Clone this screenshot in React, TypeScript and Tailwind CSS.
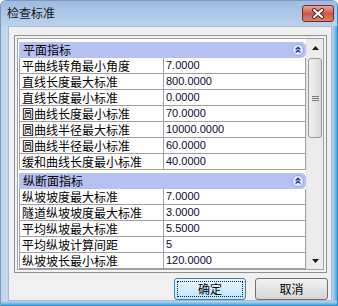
import React from 'react';

const cjk = { fontFamily: "'Noto Sans CJK SC', 'Noto Sans', sans-serif" };
const num = { fontFamily: "'Liberation Sans', Arial, sans-serif" };

type Row = { name: string; value: string };

const planRows: Row[] = [
  { name: '平曲线转角最小角度', value: '7.0000' },
  { name: '直线长度最大标准', value: '800.0000' },
  { name: '直线长度最小标准', value: '0.0000' },
  { name: '圆曲线长度最小标准', value: '70.0000' },
  { name: '圆曲线半径最大标准', value: '10000.0000' },
  { name: '圆曲线半径最小标准', value: '60.0000' },
  { name: '缓和曲线长度最小标准', value: '40.0000' },
];

// last row is only a sliver at the bottom edge, its text is hidden
const profileRows: Row[] = [
  { name: '纵坡坡度最大标准', value: '7.0000' },
  { name: '隧道纵坡坡度最大标准', value: '3.0000' },
  { name: '平均纵坡最大标准', value: '5.5000' },
  { name: '平均纵坡计算间距', value: '5' },
  { name: '纵坡坡长最小标准', value: '120.0000' },
  { name: '', value: '' },
];

const CollapseIcon = () => (
  <svg width="12" height="12" viewBox="0 0 12 12">
    <circle cx="6" cy="6" r="5.5" fill="#e6ecff" stroke="#97a8e6" />
    <path d="M3.6 5.4 L6 3.2 L8.4 5.4 M3.6 8.4 L6 6.2 L8.4 8.4" fill="none" stroke="#2741b5" strokeWidth="1.4" />
  </svg>
);

const Section = ({ title, rows }: { title: string; rows: Row[] }) => (
  <div className="pt-[3px]">
    <div className="h-[16px] flex items-center justify-between bg-[#b6c1f2] rounded-r-[5px] pl-[4px] pr-[2px]">
      <span className="text-[12px] leading-none text-black" style={cjk}>{title}</span>
      <CollapseIcon />
    </div>
    {rows.map((r, i) => (
      <div key={i} className="h-[16px] flex border-l border-b border-[#a0a0a0] bg-white">
        <div className="w-[144px] shrink-0 border-r border-[#a0a0a0] pl-[2px] flex items-center text-[12px] leading-none text-black" style={cjk}>
          {r.name}
        </div>
        <div className="flex-1 border-r border-[#a0a0a0] pl-[2px] flex items-center text-[11px] leading-none text-[#0a0a30]" style={num}>
          {r.value}
        </div>
      </div>
    ))}
  </div>
);

const Scrollbar = () => (
  <div className="w-[17px] shrink-0 flex flex-col bg-[#ececec] border-l border-[#e4e4e4]">
    <div className="h-[17px] flex items-center justify-center">
      <svg width="7" height="4" viewBox="0 0 7 4"><path d="M0 4 L3.5 0 L7 4 Z" fill="#1a1a1a" /></svg>
    </div>
    <div className="mt-[2px] mx-[1px] h-[80px] rounded-[3px] border border-[#979797] bg-gradient-to-r from-[#f2f2f2] to-[#d8d8d8] flex items-center justify-center">
      <div className="flex flex-col gap-[1px]">
        <div className="w-[7px] h-[1px] bg-[#7a7a7a]" />
        <div className="w-[7px] h-[1px] bg-[#7a7a7a]" />
        <div className="w-[7px] h-[1px] bg-[#7a7a7a]" />
      </div>
    </div>
    <div className="flex-1" />
    <div className="h-[17px] flex items-center justify-center">
      <svg width="7" height="4" viewBox="0 0 7 4"><path d="M0 0 L3.5 4 L7 0 Z" fill="#1a1a1a" /></svg>
    </div>
  </div>
);

export default function App() {
  return (
    <div className="w-[338px] h-[306px] bg-white">
      <div className="w-[338px] h-[306px] flex flex-col rounded-t-[6px] overflow-hidden bg-[#c2d7ee] border border-[#7d98b8] border-r-[#2b8fcb] border-b-[#2b8fcb]">
        {/* title bar */}
        <div className="h-[25px] shrink-0 flex items-start justify-between bg-gradient-to-b from-[#9fbbdf] to-[#bad2ec]">
          <span className="pl-[6px] pt-[5px] text-[12px] leading-[14px] text-[#141414]" style={cjk}>检查标准</span>
          <div className="mt-[4px] mr-[3px] w-[32px] h-[17px] rounded-[3px] border border-[#6e2a24] bg-gradient-to-b from-[#e9a99a] via-[#c8584a] to-[#d9836f] flex items-center justify-center">
            <svg width="14" height="11" viewBox="0 0 14 11">
              <path d="M3 2 L11 9 M11 2 L3 9" stroke="#4a2220" strokeWidth="4" strokeLinecap="round" />
              <path d="M3 2 L11 9 M11 2 L3 9" stroke="#ffffff" strokeWidth="2.2" strokeLinecap="round" />
            </svg>
          </div>
        </div>
        <div className="flex-1 flex">
          <div className="w-[7px] shrink-0" />
          <div className="flex-1 bg-[#f0f0f0] border border-[#a5b9d1] flex flex-col">
            {/* property grid */}
            <div className="mt-[8px] ml-[5px] w-[313px] border border-[#8e8f8f] p-[2px] bg-[#f4f4f4]">
              <div className="h-[232px] border border-[#a0a0a0] flex bg-white">
                <div className="flex-1 overflow-hidden pl-[1px]">
                  <Section title="平面指标" rows={planRows} />
                  <Section title="纵断面指标" rows={profileRows} />
                </div>
                <Scrollbar />
              </div>
            </div>
            {/* buttons */}
            <div className="mt-[5px] flex justify-end gap-[9px] pr-[3px]">
              <button className="w-[72px] h-[22px] rounded-[3px] border border-[#3c7fb1] bg-gradient-to-b from-[#eaf6fd] to-[#bee6fd] p-[2px]">
                <div className="w-full h-full border border-dotted border-[#202020] flex items-center justify-center text-[12px] leading-none text-black" style={cjk}>
                  确定
                </div>
              </button>
              <button className="w-[73px] h-[22px] rounded-[3px] border border-[#707070] bg-gradient-to-b from-[#f2f2f2] to-[#d5d5d5] flex items-center justify-center text-[12px] leading-none text-black" style={cjk}>
                取消
              </button>
            </div>
          </div>
          <div className="w-[5px] shrink-0 bg-gradient-to-r from-[#c2d7ee] to-[#4aa6dc]" />
        </div>
        <div className="h-[4px] shrink-0 bg-gradient-to-b from-[#c2d7ee] to-[#4aa6dc]" />
      </div>
    </div>
  );
}
